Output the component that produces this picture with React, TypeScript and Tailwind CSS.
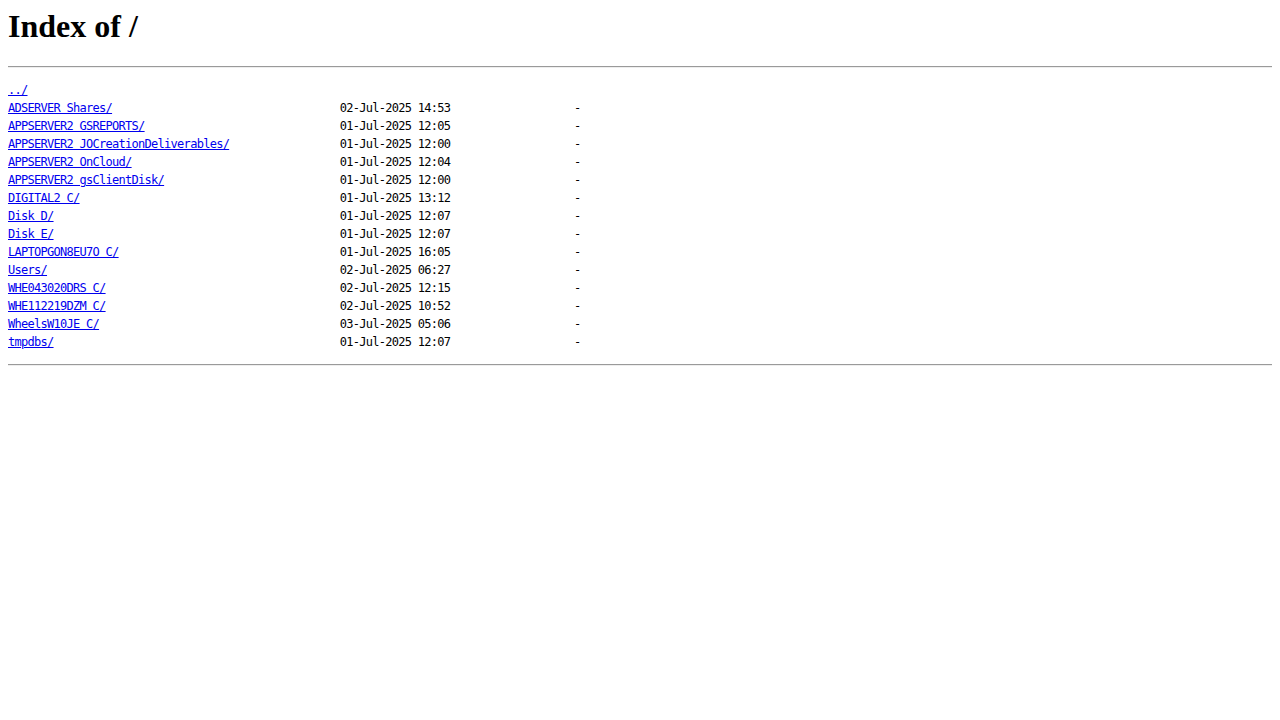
const rows: [string, string][] = [
  ["ADSERVER Shares/", "02-Jul-2025 14:53"],
  ["APPSERVER2 GSREPORTS/", "01-Jul-2025 12:05"],
  ["APPSERVER2 JOCreationDeliverables/", "01-Jul-2025 12:00"],
  ["APPSERVER2 OnCloud/", "01-Jul-2025 12:04"],
  ["APPSERVER2 gsClientDisk/", "01-Jul-2025 12:00"],
  ["DIGITAL2 C/", "01-Jul-2025 13:12"],
  ["Disk D/", "01-Jul-2025 12:07"],
  ["Disk E/", "01-Jul-2025 12:07"],
  ["LAPTOPGON8EU7O C/", "01-Jul-2025 16:05"],
  ["Users/", "02-Jul-2025 06:27"],
  ["WHE043020DRS C/", "02-Jul-2025 12:15"],
  ["WHE112219DZM C/", "02-Jul-2025 10:52"],
  ["WheelsW10JE C/", "03-Jul-2025 05:06"],
  ["tmpdbs/", "01-Jul-2025 12:07"],
];

const pad = (n: number) => " ".repeat(Math.max(0, n));

export default function App() {
  return (
    <div className="min-h-screen bg-white px-2 pt-2 text-black">
      <h1 className="mb-[21px] font-['Liberation_Serif',serif] text-[32px] font-bold leading-[37px]">
        Index of /
      </h1>
      <hr className="border-0 border-t border-b border-t-[#9a9a9a] border-b-[#eeeeee]" />
      <pre className="mt-[13px] mb-[13px] font-['DejaVu_Sans_Mono',monospace] text-[12px] leading-[18px] tracking-[-0.72px]">
        <a href="#" className="text-[#0000ee] underline">../</a>
        {"\n"}
        {rows.map(([name, date]) => (
          <span key={name}>
            <a href="#" className="text-[#0000ee] underline">{name}</a>
            {pad(51 - name.length) + date + pad(19) + "-\n"}
          </span>
        ))}
      </pre>
      <hr className="border-0 border-t border-b border-t-[#9a9a9a] border-b-[#eeeeee]" />
    </div>
  );
}
